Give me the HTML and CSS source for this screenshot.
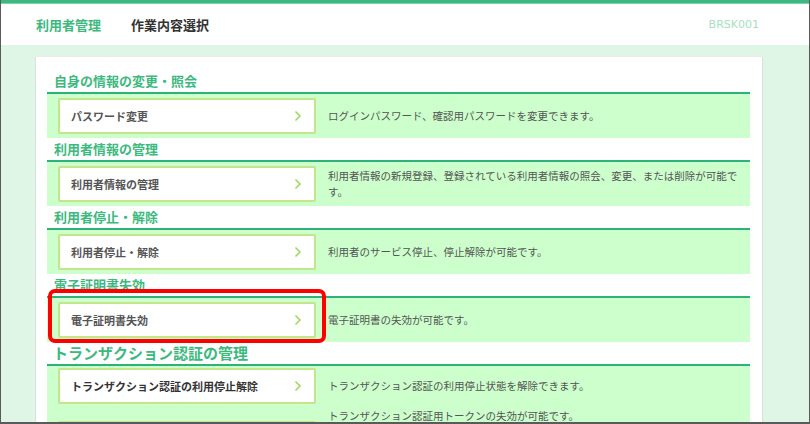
FILE: index.html
```html
<!DOCTYPE html>
<html lang="ja">
<head>
  <meta charset="UTF-8" />
  <meta name="viewport" content="width=device-width, initial-scale=1.0"/>
  <title>作業内容選択</title>
  <link rel="stylesheet" href="styles.css">
</head>
<body>
  <div class="screen">
    <div class="topline"></div>
    <header class="head">
      <span class="head-app">利用者管理</span>
      <span class="head-title">作業内容選択</span>
      <span class="head-id">BRSK001</span>
    </header>

    <main class="main">
      <div class="card">

        <section class="group">
          <h2 class="group-title">自身の情報の変更・照会</h2>
          <div class="group-body">
            <div class="item">
              <a class="item-btn" href="#"><span>パスワード変更</span><svg class="chev" viewBox="0 0 8 12"><polyline points="1.5,1.5 6,6 1.5,10.5"/></svg></a>
              <p class="item-desc">ログインパスワード、確認用パスワードを変更できます。</p>
            </div>
          </div>
        </section>

        <section class="group">
          <h2 class="group-title">利用者情報の管理</h2>
          <div class="group-body">
            <div class="item">
              <a class="item-btn" href="#"><span>利用者情報の管理</span><svg class="chev" viewBox="0 0 8 12"><polyline points="1.5,1.5 6,6 1.5,10.5"/></svg></a>
              <p class="item-desc">利用者情報の新規登録、登録されている利用者情報の照会、変更、または削除が可能です。</p>
            </div>
          </div>
        </section>

        <section class="group">
          <h2 class="group-title">利用者停止・解除</h2>
          <div class="group-body">
            <div class="item">
              <a class="item-btn" href="#"><span>利用者停止・解除</span><svg class="chev" viewBox="0 0 8 12"><polyline points="1.5,1.5 6,6 1.5,10.5"/></svg></a>
              <p class="item-desc">利用者のサービス停止、停止解除が可能です。</p>
            </div>
          </div>
        </section>

        <section class="group">
          <h2 class="group-title">電子証明書失効</h2>
          <div class="group-body">
            <div class="item">
              <a class="item-btn" href="#"><span>電子証明書失効</span><svg class="chev" viewBox="0 0 8 12"><polyline points="1.5,1.5 6,6 1.5,10.5"/></svg></a>
              <p class="item-desc">電子証明書の失効が可能です。</p>
            </div>
          </div>
          <div class="highlight"></div>
        </section>

        <section class="group">
          <h2 class="group-title big">トランザクション認証の管理</h2>
          <div class="group-body">
            <div class="item item-first">
              <a class="item-btn strong" href="#"><span>トランザクション認証の利用停止解除</span><svg class="chev" viewBox="0 0 8 12"><polyline points="1.5,1.5 6,6 1.5,10.5"/></svg></a>
              <p class="item-desc">トランザクション認証の利用停止状態を解除できます。</p>
            </div>
            <div class="item item-top">
              <a class="item-btn" href="#"><svg class="chev" viewBox="0 0 8 12"><polyline points="1.5,1.5 6,6 1.5,10.5"/></svg></a>
              <p class="item-desc">トランザクション認証用トークンの失効が可能です。</p>
            </div>
          </div>
        </section>

      </div>
    </main>
  </div>
</body>
</html>
```

FILE: styles.css
```css
* {
  box-sizing: border-box;
}

body {
  margin: 0;
  font-family: "Noto Sans CJK JP", "Noto Sans", sans-serif;
  background: #fff;
}

.screen {
  width: 810px;
  height: 424px;
  overflow: hidden;
  position: relative;
  border-left: 1px solid #5a5a5a;
  border-right: 1px solid #5a5a5a;
  background: #dff5e5;
}

.screen::after {
  content: "";
  position: absolute;
  left: 0;
  right: 0;
  bottom: 0;
  height: 2px;
  background: #5a5a5a;
}

.topline {
  height: 4px;
  background: #3cb880;
  border-bottom: 1px solid #7fd3a8;
}

.head {
  height: 41px;
  background: #fff;
  display: flex;
  align-items: center;
  padding: 0 50px 0 35px;
  font-size: 13px;
  font-weight: bold;
}

.head-app {
  color: #3cb97e;
  margin-right: 30px;
}

.head-title {
  color: #333;
}

.head-id {
  margin-left: auto;
  font-size: 11px;
  font-weight: normal;
  color: #a6e0bf;
  font-family: "DejaVu Sans", sans-serif;
}

.main {
  padding: 12px 0 0 35px;
}

.card {
  width: 726px;
  background: #fff;
  padding: 13px 12px 0 11px;
  box-shadow: -1px 0 0 #d8e2dc, 1px 0 0 #d8e2dc, 0 -1px 0 #e6eee9;
  height: 400px;
}

.group {
  position: relative;
}

.group-title {
  margin: 0;
  height: 22px;
  line-height: 22px;
  padding-left: 7px;
  font-size: 13px;
  font-weight: bold;
  color: #3cb97e;
}

.group-title.big {
  font-size: 15px;
  padding-left: 6px;
}

.group-body {
  border-top: 2px solid #2db37a;
  background: #ccffcc;
}

.item {
  display: flex;
  align-items: center;
  padding: 4px 0 4px 11px;
}

.item-first {
  padding-top: 2px;
}

.item-top {
  align-items: flex-start;
  padding-top: 0;
}

.item-top .item-btn {
  margin-top: 13px;
  justify-content: flex-end;
}

.item-btn {
  flex: 0 0 258px;
  height: 36px;
  display: flex;
  align-items: center;
  justify-content: space-between;
  padding: 0 12px 0 11px;
  background: #fff;
  border: 2px solid #c3e68a;
  border-radius: 2px;
  text-decoration: none;
  font-size: 11px;
  font-weight: bold;
  color: #555;
}

.item-btn.strong {
  color: #333;
}

.chev {
  width: 8px;
  height: 12px;
  fill: none;
  stroke: #9fd65c;
  stroke-width: 1.5;
}

.item-desc {
  flex: 1;
  margin: 0 0 0 12px;
  padding-right: 8px;
  font-size: 10.5px;
  line-height: 16px;
  color: #555;
}

.highlight {
  position: absolute;
  left: 1px;
  top: 15px;
  width: 278px;
  height: 54px;
  border: 4px solid #f00;
  border-radius: 7px;
}
```
